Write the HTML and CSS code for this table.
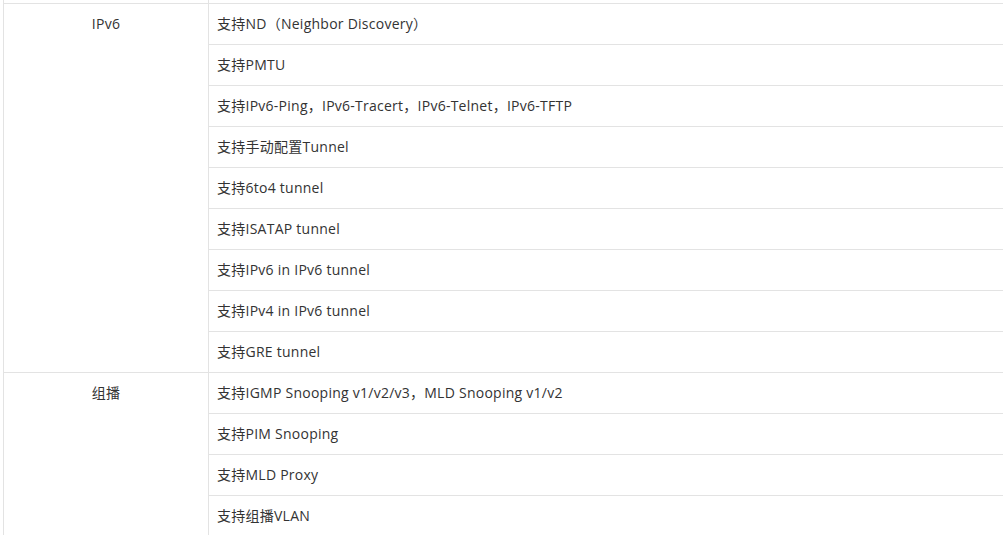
FILE: index.html
```html
<!DOCTYPE html>
<html>
<head>
<meta charset="utf-8">
<link rel="stylesheet" href="styles.css">
</head>
<body>
<div class="wrap">
<table class="spec">
  <tbody>
    <tr><td class="label"></td><td class="item">&nbsp;</td></tr>
    <tr><td class="label" rowspan="9">IPv6</td><td class="item">支持ND（Neighbor Discovery）</td></tr>
    <tr><td class="item">支持PMTU</td></tr>
    <tr><td class="item">支持IPv6-Ping，IPv6-Tracert，IPv6-Telnet，IPv6-TFTP</td></tr>
    <tr><td class="item">支持手动配置Tunnel</td></tr>
    <tr><td class="item">支持6to4 tunnel</td></tr>
    <tr><td class="item">支持ISATAP tunnel</td></tr>
    <tr><td class="item">支持IPv6 in IPv6 tunnel</td></tr>
    <tr><td class="item">支持IPv4 in IPv6 tunnel</td></tr>
    <tr><td class="item">支持GRE tunnel</td></tr>
    <tr><td class="label" rowspan="5">组播</td><td class="item">支持IGMP Snooping v1/v2/v3，MLD Snooping v1/v2</td></tr>
    <tr><td class="item">支持PIM Snooping</td></tr>
    <tr><td class="item">支持MLD Proxy</td></tr>
    <tr><td class="item">支持组播VLAN</td></tr>
    <tr><td class="item">&nbsp;</td></tr>
  </tbody>
</table>
</div>
</body>
</html>
```
FILE: styles.css
```css
html, body {
  margin: 0;
  padding: 0;
  background: #fff;
  overflow: hidden;
}
.wrap {
  padding-left: 3px;
  width: 1100px;
}
.spec {
  margin-top: -38px;
  border-collapse: collapse;
  width: 1050px;
  font-family: "Open Sans", "Noto Sans CJK SC", sans-serif;
  font-size: 14px;
  letter-spacing: 0.25px;
  color: #333;
}
.spec td {
  border: 1px solid #e3e3e3;
  padding: 10px 8px;
  line-height: 20px;
  vertical-align: top;
}
.spec .label {
  width: 188px;
  text-align: center;
}
.spec .item {
  text-align: left;
}
```
